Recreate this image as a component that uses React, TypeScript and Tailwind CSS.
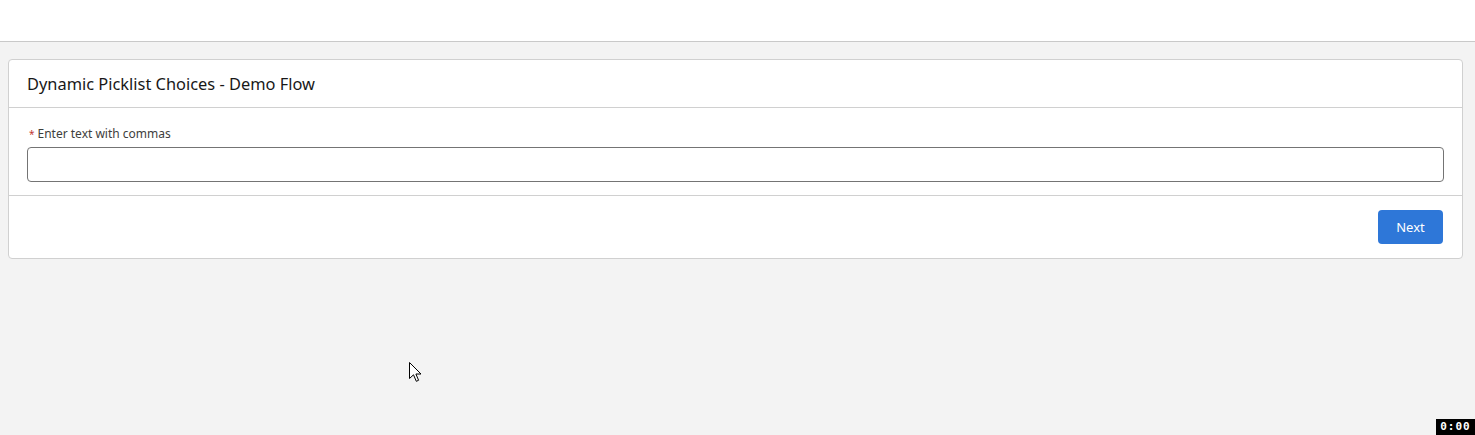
import React from 'react';

const Cursor: React.FC = () => (
  <svg width="14" height="21" viewBox="0 0 14 21" className="absolute left-[409px] top-[362px]">
    <path
      d="M0.5 0.5 L0.5 16.5 L4.5 12.8 L7.3 19.3 L9.6 18.3 L6.9 12 L12 12 Z"
      fill="#ffffff"
      stroke="#000000"
      strokeWidth="1"
      strokeLinejoin="miter"
    />
  </svg>
);

const App: React.FC = () => {
  return (
    <div
      className="relative w-[1475px] h-[435px] bg-[#f3f3f3] overflow-hidden"
      style={{ fontFamily: '"Noto Sans", "Open Sans", sans-serif' }}
    >
      <div className="h-[42px] bg-white border-b border-[#c9c9c9]" />
      <div className="px-[8px] pt-[17px] pr-[12px]">
        <div className="bg-white border border-[#d0d0d0] rounded-[4px]">
          <div className="h-[48px] flex items-center px-[18px] border-b border-[#d0d0d0]">
            <h1 className="text-[16.4px] text-[#181818] leading-none pt-[2px]">Dynamic Picklist Choices - Demo Flow</h1>
          </div>
          <div className="px-[18px] pt-[19px] pb-[13px] border-b border-[#d0d0d0]">
            <label className="flex items-center text-[12px] text-[#3e3e3c] leading-[14px] mb-[6px] pl-[2px]">
              <span className="text-[#c23934] text-[10px] mr-[3px]">*</span>Enter text with commas
            </label>
            <input
              type="text"
              className="block w-full h-[35px] border border-[#747474] rounded-[4px] bg-white px-3 outline-none"
            />
          </div>
          <div className="flex justify-end px-[19px] pt-[14px] pb-[14px]">
            <button
              type="button"
              className="h-[34px] w-[65px] rounded-[4px] bg-[#2e77d8] text-white text-[13px] pt-[1px]"
            >
              Next
            </button>
          </div>
        </div>
      </div>
      <Cursor />
      <div
        className="absolute right-0 bottom-0 w-[39px] h-[16px] bg-black text-white text-[11px] leading-[16px] text-center font-bold tracking-[1px]"
        style={{ fontFamily: '"DejaVu Sans Mono", monospace' }}
      >
        0:00
      </div>
    </div>
  );
};

export default App;
